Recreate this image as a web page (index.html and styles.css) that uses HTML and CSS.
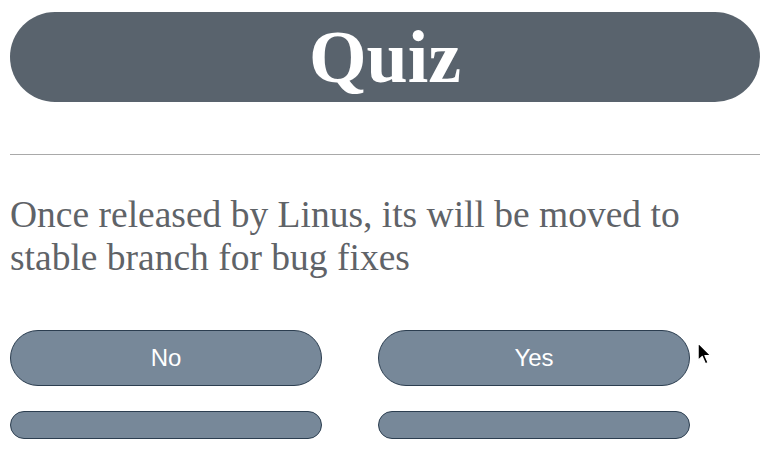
FILE: index.html
```html
<!DOCTYPE html>
<html lang="en">
<head>
<meta charset="utf-8">
<title>Quiz</title>
<link rel="stylesheet" href="styles.css">
</head>
<body>
<div class="page">
  <h1 class="title">Quiz</h1>
  <div class="divider"></div>
  <p class="question">Once released by Linus, its will be moved to stable branch for bug fixes</p>
  <div class="answers">
    <button class="answer">No</button>
    <button class="answer">Yes</button>
    <button class="answer answer-small"></button>
    <button class="answer answer-small"></button>
  </div>
  <svg class="cursor" width="16" height="24" viewBox="0 0 14 21" aria-hidden="true">
    <path d="M1 1 L1 16 L4.6 12.6 L7.4 19 L9.6 18 L6.9 11.8 L12 11.8 Z" fill="#000" stroke="#fff" stroke-width="1" stroke-linejoin="round"/>
  </svg>
</div>
</body>
</html>
```
FILE: styles.css
```css
html, body {
  margin: 0;
  padding: 0;
  background: #ffffff;
}

body {
  font-family: "Liberation Serif", "Times New Roman", serif;
}

.page {
  position: relative;
  width: 750px;
  padding: 12px 0 0 10px;
}

.title {
  margin: 0;
  height: 90px;
  border-radius: 45px;
  background: #59636d;
  color: #ffffff;
  display: flex;
  align-items: center;
  justify-content: center;
  font-family: "Liberation Serif", "Times New Roman", serif;
  font-weight: bold;
  font-size: 74px;
  line-height: 1;
}

.divider {
  margin-top: 52px;
  border-top: 1px solid #a9a9a9;
}

.question {
  margin: 38px 0 0 0;
  font-size: 37.5px;
  line-height: 43px;
  color: #5f6368;
}

.answers {
  margin-top: 51px;
  display: grid;
  grid-template-columns: 312px 312px;
  column-gap: 56px;
  row-gap: 25px;
}

.answer {
  height: 56px;
  margin: 0;
  padding: 0;
  border: 1px solid #2c3e50;
  border-radius: 28px;
  background: #778899;
  color: #ffffff;
  font-family: "Liberation Sans", Arial, sans-serif;
  font-size: 24px;
  display: flex;
  align-items: center;
  justify-content: center;
}

.answer-small {
  height: 28px;
  border-radius: 14px;
}

.cursor {
  position: absolute;
  left: 697px;
  top: 342px;
}
```
